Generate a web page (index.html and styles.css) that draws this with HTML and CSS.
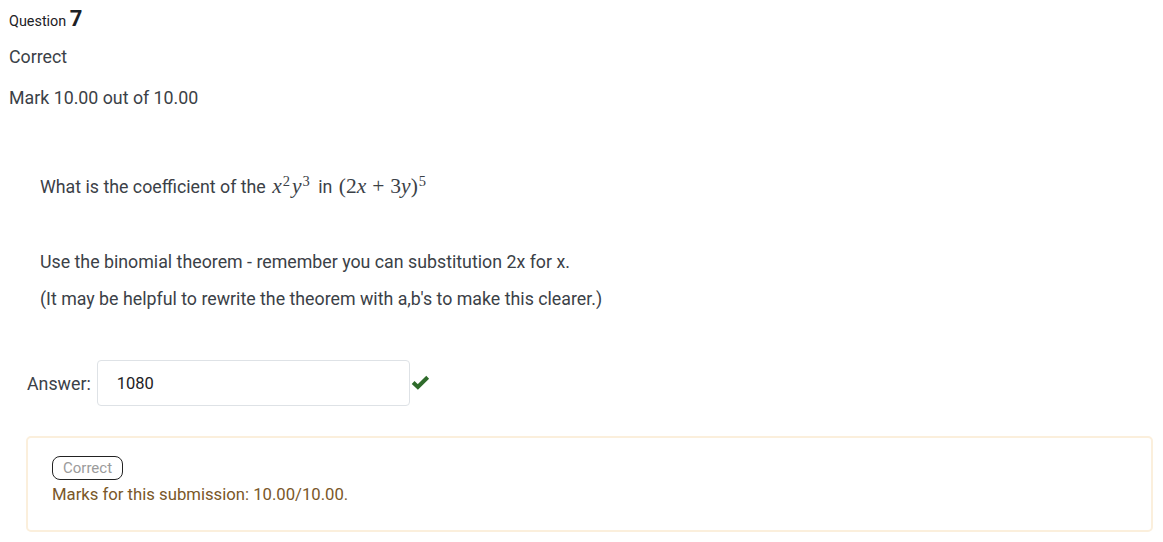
FILE: index.html
```
<!DOCTYPE html>
<html>
<head>
<meta charset="utf-8">
<link rel="stylesheet" href="styles.css">
</head>
<body>
<div class="que">
  <div class="info">
    <h3 class="no">Question <span class="qno">7</span></h3>
    <div class="state">Correct</div>
    <div class="grade">Mark 10.00 out of 10.00</div>
  </div>
  <div class="content">
    <div class="formulation">
      <div class="qtext">
        <p class="q">What is the coefficient of the <span class="math"><i>x</i><sup>2</sup><i>y</i><sup>3</sup></span> in <span class="math">(2<i>x</i><span class="op">+</span>3<i>y</i>)<sup>5</sup></span></p>
        <p class="hint">Use the binomial theorem - remember you can substitution 2x for x.</p>
        <p class="hint2">(It may be helpful to rewrite the theorem with a,b's to make this clearer.)</p>
      </div>
      <div class="ablock">
        <label class="alabel">Answer:</label>
        <div class="input">1080</div>
        <svg class="tick" width="19" height="15" viewBox="0 0 18 14"><path d="M2 7 L6.5 11.2 L15.8 2" fill="none" stroke="#2f6b2b" stroke-width="3.8" stroke-linejoin="miter"/></svg>
      </div>
    </div>
    <div class="outcome">
      <span class="badge">Correct</span>
      <div class="marks">Marks for this submission: 10.00/10.00.</div>
    </div>
  </div>
</div>
</body>
</html>
```
FILE: styles.css
```
* { box-sizing: border-box; }
html, body { margin: 0; padding: 0; background: #fff; }
body {
  font-family: Roboto, "Liberation Sans", sans-serif;
  color: #3b4147;
  font-size: 17.8px;
}
.que { padding: 0 10px 0 9px; }
.info { padding-top: 7px; }
.no {
  margin: 0;
  font-size: 14.4px;
  font-weight: 400;
  line-height: 24px;
  color: #1d2125;
}
.qno { font-size: 22px; font-weight: 700; }
.state { margin-top: 11px; line-height: 24px; }
.grade { margin-top: 17px; line-height: 24px; }
.content { padding: 0 0 0 17px; }
.formulation { padding: 63px 0 0 14px; }
.qtext p { margin: 0; line-height: 26px; }
.math { font-family: "Liberation Serif", serif; font-size: 21.5px; margin-left: 2px; margin-right: 2px; }
.math i { font-style: italic; }
.math sup { font-size: 14.5px; vertical-align: 7px; line-height: 0; margin-left: 1px; margin-right: 2px; }
.op { padding: 0 6px; }
.hint { margin-top: 49px !important; }
.hint2 { margin-top: 11px !important; }
.ablock {
  display: flex;
  align-items: center;
  margin-top: 48px;
  margin-left: -13px;
}
.alabel { margin-right: 6px; }
.input {
  width: 313px;
  height: 46px;
  border: 1px solid #dee2e6;
  border-radius: 4px;
  padding: 0 19px;
  display: flex;
  align-items: center;
  font-size: 16.5px;
  color: #1d2125;
}
.tick { margin-left: 1px; margin-top: -2px; }
.outcome {
  margin-top: 30px;
  border: 2px solid #fbefdc;
  border-radius: 5px;
  height: 96px;
  padding: 18px 24px;
}
.badge {
  display: inline-block;
  border: 1.5px solid #222;
  border-radius: 8px;
  color: #9b9b9b;
  font-size: 15px;
  line-height: 22px;
  padding: 0 10px;
  vertical-align: top;
}
.marks {
  color: #7a5728;
  font-size: 16.7px;
  margin-top: 3px;
  line-height: 24px;
}
```
